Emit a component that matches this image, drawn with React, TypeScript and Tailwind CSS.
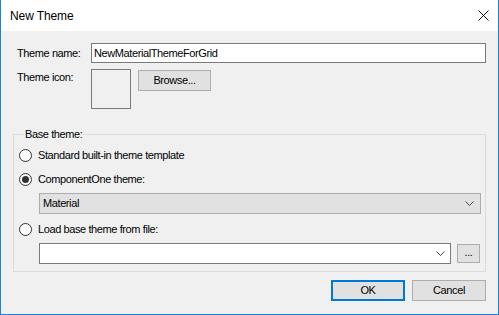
import React from 'react';

const font = { fontFamily: '"Liberation Sans", Arial, sans-serif' };

function Chevron() {
  return (
    <svg width="9" height="5" viewBox="0 0 9 5" className="shrink-0">
      <path d="M0.5 0.5 L4.5 4.5 L8.5 0.5" fill="none" stroke="#444" strokeWidth="1" />
    </svg>
  );
}

function Radio({ label, checked = false }: { label: string; checked?: boolean }) {
  return (
    <div className="flex h-[24px] items-center gap-[6px]">
      <div className="flex h-[13px] w-[13px] items-center justify-center rounded-full border border-[#333333] bg-white">
        {checked && <div className="h-[7px] w-[7px] rounded-full bg-[#333333]" />}
      </div>
      <span>{label}</span>
    </div>
  );
}

export default function App() {
  return (
    <div
      className="flex h-[315px] w-[499px] flex-col border-x border-b border-[#1c82d6] bg-[#f0f0f0] text-[11px] leading-[13px] tracking-[-0.4px] text-black"
      style={font}
    >
      {/* title bar */}
      <div className="flex h-[31px] shrink-0 items-center justify-between bg-white pl-[9px] pr-[9px]">
        <span className="pt-[1px] text-[12px] tracking-[-0.1px]">New Theme</span>
        <svg width="11" height="11" viewBox="0 0 11 11">
          <path d="M0.5 0.5 L10.5 10.5 M10.5 0.5 L0.5 10.5" stroke="#111" strokeWidth="1" />
        </svg>
      </div>

      <div className="flex flex-col px-[12px] pt-[12px]">
        <div className="flex items-center pl-[4px]">
          <span className="w-[74px]">Theme name:</span>
          <div className="flex h-[20px] flex-1 items-center border border-[#7a7a7a] bg-white pl-[2px]">
            NewMaterialThemeForGrid
          </div>
        </div>

        <div className="mt-[6px] flex items-start pl-[4px]">
          <span className="w-[74px] pt-[2px]">Theme icon:</span>
          <div className="h-[40px] w-[40px] border border-[#7a7a7a]" />
          <button className="ml-[7px] mt-[1px] flex h-[21px] w-[73px] items-center justify-center border border-[#adadad] bg-[#e1e1e1]">
            Browse...
          </button>
        </div>

        <fieldset className="mt-[19px] border border-[#dcdcdc]">
          <legend className="ml-[10px] px-[1px]">Base theme:</legend>
          <div className="flex flex-col pl-[5px] pr-[4px] pt-[2px] pb-[7px]">
            <Radio label="Standard built-in theme template" />
            <Radio label="ComponentOne theme:" checked />
            <div className="ml-[20px] mt-[2px] flex h-[21px] items-center justify-between border border-[#adadad] bg-[#e1e1e1] pl-[3px] pr-[6px]">
              <span>Material</span>
              <Chevron />
            </div>
            <div className="mt-[3px]">
              <Radio label="Load base theme from file:" />
            </div>
            <div className="ml-[20px] mt-[2px] flex items-center gap-[6px]">
              <div className="flex h-[21px] flex-1 items-center justify-end border border-[#7a7a7a] bg-white pr-[5px]">
                <Chevron />
              </div>
              <button className="mr-[1px] flex h-[19px] w-[23px] items-center justify-center border border-[#adadad] bg-[#e1e1e1] pb-[3px]">
                ...
              </button>
            </div>
          </div>
        </fieldset>

        <div className="mt-[8px] flex justify-end gap-[7px]">
          <button className="flex h-[21px] w-[74px] items-center justify-center border-2 border-[#0078d7] bg-[#e1e1e1]">
            OK
          </button>
          <button className="flex h-[21px] w-[74px] items-center justify-center border border-[#adadad] bg-[#e1e1e1]">
            Cancel
          </button>
        </div>
      </div>
    </div>
  );
}
